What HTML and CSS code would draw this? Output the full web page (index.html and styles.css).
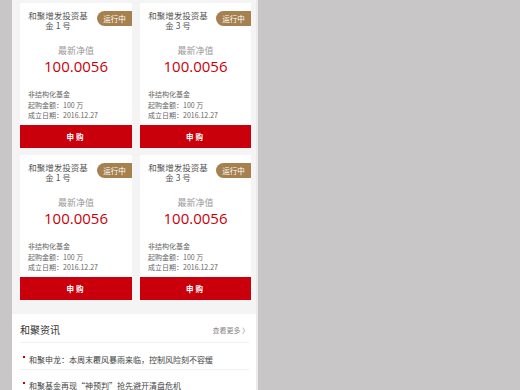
FILE: index.html
```html
<!DOCTYPE html>
<html lang="zh-CN">
<head>
    <meta charset="UTF-8">
    <meta name="viewport" content="width=device-width, initial-scale=1.0">
    <title>和聚基金</title>
    <link rel="stylesheet" href="styles.css">
</head>
<body>
    <div class="page">
        <div class="fund-grid">
            <div class="fund-card">
                <div class="fund-head">
                    <div class="fund-name">和聚增发投资基金 1 号</div>
                    <span class="badge">运行中</span>
                </div>
                <div class="nav-label">最新净值</div>
                <div class="nav-value">100.0056</div>
                <ul class="fund-info">
                    <li>非结构化基金</li>
                    <li>起购金额：100 万</li>
                    <li>成立日期：2016.12.27</li>
                </ul>
                <a class="buy-btn" href="#">申购</a>
            </div>
            <div class="fund-card">
                <div class="fund-head">
                    <div class="fund-name">和聚增发投资基金 3 号</div>
                    <span class="badge">运行中</span>
                </div>
                <div class="nav-label">最新净值</div>
                <div class="nav-value">100.0056</div>
                <ul class="fund-info">
                    <li>非结构化基金</li>
                    <li>起购金额：100 万</li>
                    <li>成立日期：2016.12.27</li>
                </ul>
                <a class="buy-btn" href="#">申购</a>
            </div>
            <div class="fund-card">
                <div class="fund-head">
                    <div class="fund-name">和聚增发投资基金 1 号</div>
                    <span class="badge">运行中</span>
                </div>
                <div class="nav-label">最新净值</div>
                <div class="nav-value">100.0056</div>
                <ul class="fund-info">
                    <li>非结构化基金</li>
                    <li>起购金额：100 万</li>
                    <li>成立日期：2016.12.27</li>
                </ul>
                <a class="buy-btn" href="#">申购</a>
            </div>
            <div class="fund-card">
                <div class="fund-head">
                    <div class="fund-name">和聚增发投资基金 3 号</div>
                    <span class="badge">运行中</span>
                </div>
                <div class="nav-label">最新净值</div>
                <div class="nav-value">100.0056</div>
                <ul class="fund-info">
                    <li>非结构化基金</li>
                    <li>起购金额：100 万</li>
                    <li>成立日期：2016.12.27</li>
                </ul>
                <a class="buy-btn" href="#">申购</a>
            </div>
        </div>

        <div class="news">
            <div class="news-head">
                <h3>和聚资讯</h3>
                <a class="more" href="#">查看更多 〉</a>
            </div>
            <ul class="news-list">
                <li><a href="#">和聚申龙：本周末覆风暴雨来临，控制风险刻不容缓</a></li>
                <li><a href="#">和聚基金再现“神预判”抢先避开清盘危机</a></li>
            </ul>
        </div>
    </div>
</body>
</html>
```

FILE: styles.css
```css
body {
    margin: 0;
    background: #c8c6c7;
    font-family: "Noto Sans CJK SC", "Noto Sans", sans-serif;
}
.page {
    width: 244px;
    min-height: 390px;
    margin-left: 12px;
    background: #f4f4f4;
    border-right: 2px solid #ebebeb;
}
.fund-grid {
    display: grid;
    grid-template-columns: 112px 111px;
    column-gap: 8px;
    row-gap: 7px;
    padding: 3px 0 14px 8px;
}
.fund-card {
    background: #fff;
    display: flex;
    flex-direction: column;
}
.fund-head {
    display: flex;
    justify-content: space-between;
    align-items: flex-start;
    padding-top: 7px;
}
.fund-name {
    width: 64px;
    padding-left: 6px;
    font-size: 8.5px;
    line-height: 10px;
    color: #555;
    text-align: center;
}
.badge {
    margin-top: 1px;
    width: 35px;
    height: 15px;
    line-height: 15px;
    border-radius: 8px 0 0 8px;
    background: #a6814f;
    color: #fff;
    font-size: 7.5px;
    text-align: center;
}
.nav-label {
    margin-top: 15px;
    font-size: 9px;
    line-height: 12px;
    color: #999;
    text-align: center;
}
.nav-value {
    font-family: "Open Sans", sans-serif;
    font-size: 15px;
    line-height: 18px;
    color: #c9000b;
    text-align: center;
}
.fund-info {
    list-style: none;
    margin: 14px 0 0;
    padding: 0 0 0 8px;
    font-size: 7px;
    line-height: 10.5px;
    color: #666;
}
.buy-btn {
    display: block;
    margin-top: 4.5px;
    height: 23px;
    line-height: 23px;
    background: #c9000b;
    color: #fff;
    font-size: 7.5px;
    font-weight: bold;
    letter-spacing: 2px;
    text-align: center;
    text-decoration: none;
}
.news {
    background: #fff;
    padding: 0 7px 0 8px;
}
.news-head {
    display: flex;
    justify-content: space-between;
    align-items: center;
    height: 25px;
    padding-top: 3px;
    border-bottom: 1px solid #f0f0f0;
}
.news-head h3 {
    margin: 0;
    font-size: 10px;
    font-weight: normal;
    color: #333;
}
.more {
    font-size: 7px;
    color: #888;
    text-decoration: none;
}
.news-list {
    list-style: none;
    margin: 0;
    padding: 1px 0 0;
}
.news-list li {
    height: 25px;
    line-height: 25px;
    border-bottom: 1px solid #f0f0f0;
    padding-left: 9px;
    position: relative;
}
.news-list li::before {
    content: "";
    position: absolute;
    left: 3px;
    top: 12px;
    width: 2px;
    height: 2px;
    background: #c9000b;
}
.news-list a {
    font-size: 8px;
    color: #444;
    text-decoration: none;
}
```
